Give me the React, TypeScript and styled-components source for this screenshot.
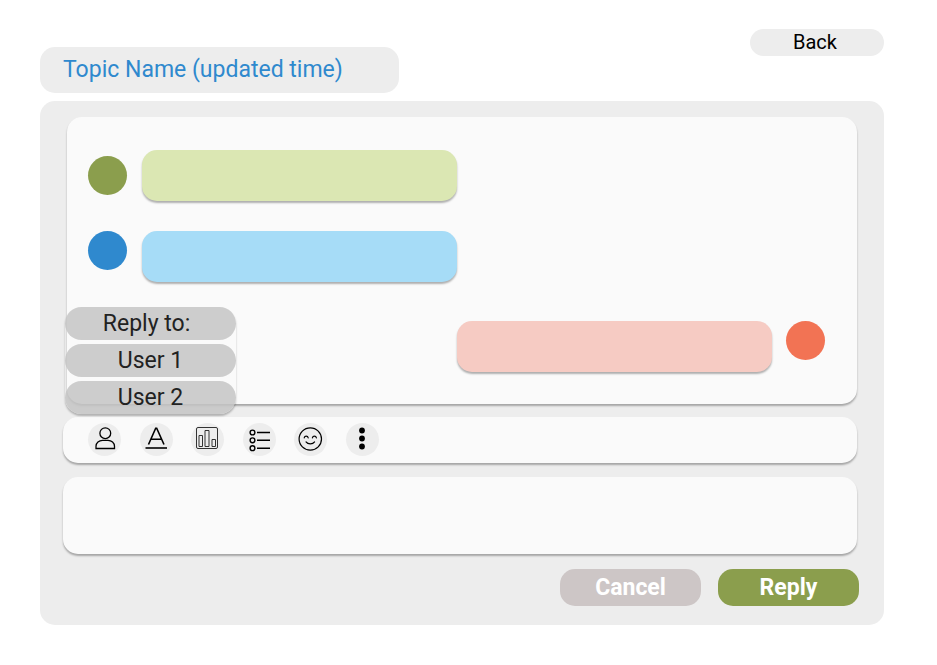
import React from "react";
import styled, { createGlobalStyle, css } from "styled-components";

const GlobalStyle = createGlobalStyle`
  *, *::before, *::after { box-sizing: border-box; }
  body {
    margin: 0;
    background: #fff;
    font-family: Roboto, "Liberation Sans", sans-serif;
  }
  button, textarea { font: inherit; border: 0; margin: 0; cursor: pointer; }
`;

const raised = css`
  background: #fafafa;
  border-radius: 15px;
  box-shadow: 0 2px 2px rgba(0, 0, 0, 0.3);
`;

const Page = styled.main`
  padding: 29px 53px 39px 40px;
`;

const Header = styled.header`
  display: flex;
  justify-content: space-between;
  align-items: flex-start;
  margin-bottom: 8px;
`;

const Topic = styled.h1`
  margin: 18px 0 0;
  padding: 0 56px 0 23px;
  border-radius: 15px;
  background: #ededed;
  color: #2f89ce;
  font-size: 23px;
  font-weight: 400;
  line-height: 46px;
`;

const BackButton = styled.button`
  width: 134px;
  padding: 0 4px 0 0;
  border-radius: 15px;
  background: #ededed;
  color: #000;
  font-size: 20px;
  line-height: 27px;
`;

const Panel = styled.section`
  display: flex;
  flex-direction: column;
  padding: 16px 27px 19px 23px;
  border-radius: 15px;
  background: #ededed;
`;

const Chat = styled.section`
  ${raised}
  position: relative;
  margin: 0 0 13px 4px;
  padding: 33px 32px 32px 21px;
`;

const Messages = styled.ul`
  display: flex;
  flex-direction: column;
  gap: 30px;
  margin: 0;
  padding: 0;
  list-style: none;
`;

const Message = styled.li<{ $own?: boolean; $middle?: boolean }>`
  display: flex;
  flex-direction: ${(p) => (p.$own ? "row-reverse" : "row")};
  align-items: ${(p) => (p.$middle ? "center" : "flex-start")};
  gap: ${(p) => (p.$own ? 14 : 15)}px;
  padding-top: ${(p) => (p.$own ? 9 : 0)}px;
`;

const Avatar = styled.span<{ $color: string }>`
  width: 39px;
  height: 39px;
  border-radius: 50%;
  background: ${(p) => p.$color};
`;

const Bubble = styled.div<{ $color: string }>`
  ${raised}
  width: 315px;
  height: 51px;
  background: ${(p) => p.$color};
`;

const ReplyMenu = styled.div`
  position: absolute;
  top: 190px;
  left: -2px;
  display: flex;
  flex-direction: column;
  gap: 4px;
  width: 171px;
  border-radius: 16px;
  box-shadow: 0 2px 2px rgba(0, 0, 0, 0.25);
  color: #222;
  font-size: 23px;
  line-height: 33px;
  text-align: center;
`;

const MenuTitle = styled.div`
  padding-right: 8px;
  border-radius: 17px;
  background: rgba(196, 196, 196, 0.85);
`;

const MenuItem = styled.button`
  padding: 0;
  border-radius: 17px;
  background: rgba(196, 196, 196, 0.85);
  color: inherit;
`;

const Toolbar = styled.div`
  ${raised}
  margin-bottom: 14px;
  padding: 6px 25px 7px;
`;

const ToolGroup = styled.div`
  display: flex;
  justify-content: space-between;
  max-width: 291px;
`;

const Tool = styled.button`
  display: grid;
  place-items: center;
  width: 33px;
  height: 33px;
  padding: 0;
  border-radius: 50%;
  background: #ededed;

  svg {
    width: 33px;
    height: 33px;
    fill: none;
    stroke: #000;
  }
`;

const Editor = styled.textarea`
  ${raised}
  display: block;
  width: 100%;
  height: 77px;
  padding: 12px 20px;
  font-size: 20px;
  resize: none;
  cursor: text;
`;

const Actions = styled.div`
  display: flex;
  justify-content: flex-end;
  gap: 17px;
  margin: 15px -2px 0 0;
`;

const Action = styled.button<{ $color: string }>`
  width: 141px;
  padding: 0;
  border-radius: 15px;
  background: ${(p) => p.$color};
  color: #fff;
  font-size: 23px;
  font-weight: 700;
  line-height: 37px;
`;

const tools = [
  {
    label: "Mention a user",
    icon: (
      <g strokeWidth="1.3">
        <circle cx="17.3" cy="10.2" r="5.4" />
        <path d="M8 25.5v-2.2c0-3.5 3-6 6.5-6h5.500c3.5 0 6.5 2.5 6.5 6v2.2z" />
      </g>
    ),
  },
  {
    label: "Text style",
    icon: (
      <g strokeWidth="1.6">
        <path d="M8.500 21.500 15.700 5.200h1L24 21.500M11.200 16.200h10.200" />
        <path d="M5.500 25h21.500" />
      </g>
    ),
  },
  {
    label: "Poll",
    icon: (
      <g strokeWidth="1" stroke="#333">
        <rect x="5.500" y="4.500" width="21" height="21" rx="1.500" />
        <path d="M8 12.500h3.500v11h-3.500zM14 7.500h4v16h-4zM21 16.500h3.500v7h-3.500z" />
      </g>
    ),
  },
  {
    label: "List",
    icon: (
      <g strokeWidth="1.4">
        <circle cx="9.500" cy="9.500" r="2.400" />
        <circle cx="9.500" cy="17.300" r="2.400" />
        <circle cx="9.500" cy="25.200" r="2.400" />
        <path d="M14 9.500h13M14 17.300h13M14 25.200h13" />
      </g>
    ),
  },
  {
    label: "Emoji",
    icon: (
      <g strokeWidth="1.200" strokeLinecap="round">
        <circle cx="16.300" cy="16" r="11.200" />
        <path d="M10.200 14.800c.5-2.200 3.500-2.200 4 0M18.400 14.800c.5-2.200 3.500-2.200 4 0M12 18.900c2 2.600 6.600 2.600 8.600 0" />
      </g>
    ),
  },
  {
    label: "More",
    icon: (
      <g fill="#000" stroke="none">
        <circle cx="16" cy="7.500" r="2.900" />
        <circle cx="16" cy="15.500" r="2.900" />
        <circle cx="16" cy="23.500" r="2.900" />
      </g>
    ),
  },
];

export default function App() {
  return (
    <>
      <GlobalStyle />
      <Page>
        <Header>
          <Topic>Topic Name (updated time)</Topic>
          <BackButton type="button">Back</BackButton>
        </Header>
        <Panel>
          <Chat>
            <Messages>
              <Message $middle>
                <Avatar $color="#8b9e4d" />
                <Bubble $color="#dbe7b3" />
              </Message>
              <Message>
                <Avatar $color="#2f89ce" />
                <Bubble $color="#a6dcf7" />
              </Message>
              <Message $own>
                <Avatar $color="#f27354" />
                <Bubble $color="#f6cbc3" />
              </Message>
            </Messages>
            <ReplyMenu role="group" aria-labelledby="reply-to">
              <MenuTitle id="reply-to">Reply to:</MenuTitle>
              <MenuItem type="button">User 1</MenuItem>
              <MenuItem type="button">User 2</MenuItem>
            </ReplyMenu>
          </Chat>
          <Toolbar role="toolbar" aria-label="Formatting">
            <ToolGroup>
              {tools.map((tool) => (
                <Tool key={tool.label} type="button" aria-label={tool.label}>
                  <svg viewBox="0 0 33 33" aria-hidden="true">
                    {tool.icon}
                  </svg>
                </Tool>
              ))}
            </ToolGroup>
          </Toolbar>
          <Editor aria-label="Reply text" />
          <Actions>
            <Action type="button" $color="#cdc6c6">
              Cancel
            </Action>
            <Action type="button" $color="#8b9e4d">
              Reply
            </Action>
          </Actions>
        </Panel>
      </Page>
    </>
  );
}
